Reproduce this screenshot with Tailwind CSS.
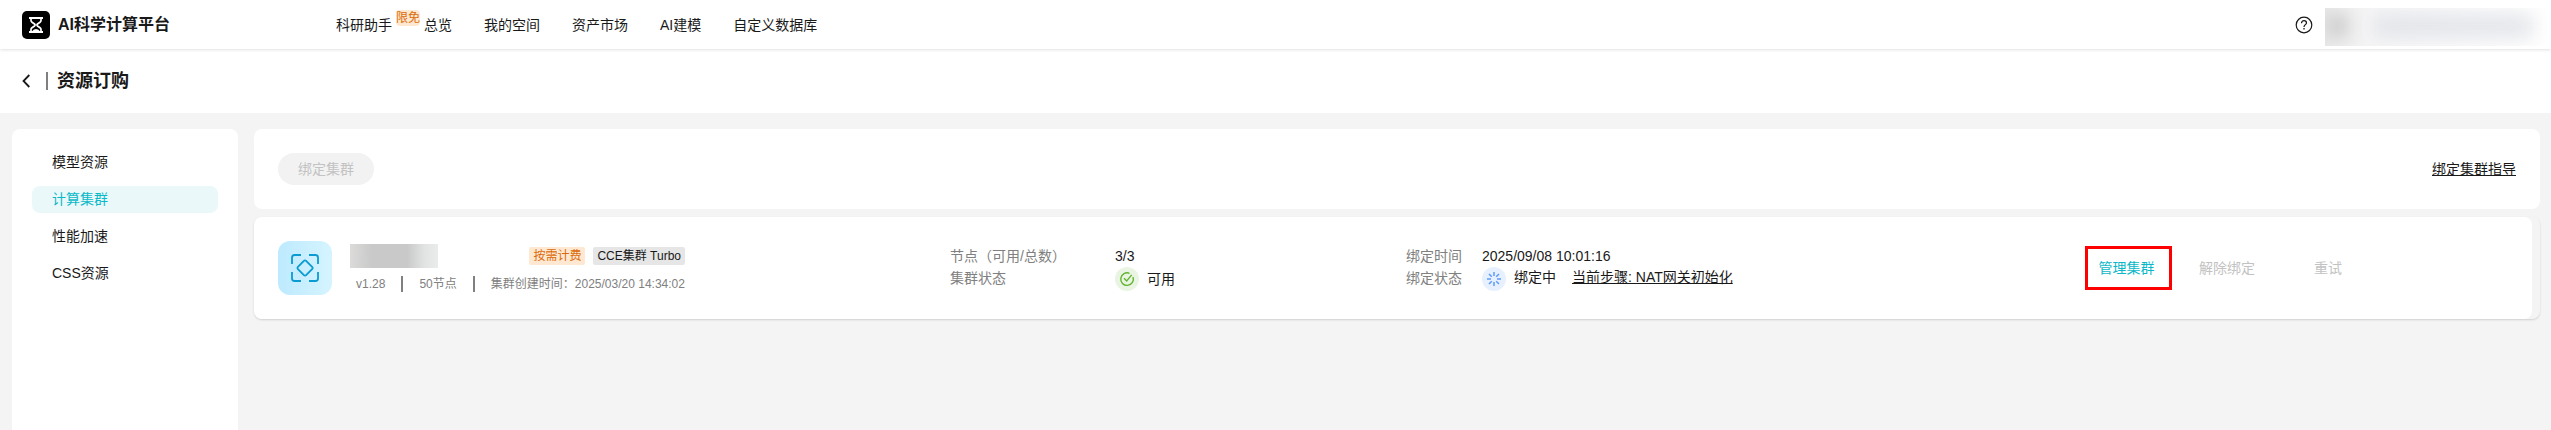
<!DOCTYPE html>
<html lang="zh-CN">
<head>
  <meta charset="UTF-8">
  <meta name="viewport" content="width=device-width, initial-scale=1.0">
  <title>AI科学计算平台</title>
  <script src="https://cdn.jsdelivr.net/npm/@tailwindcss/browser@4"></script>
</head>
<body class="min-h-screen flex flex-col bg-[#f4f4f4] text-sm text-[#191919] font-['Liberation_Sans','Noto_Sans_CJK_SC',sans-serif]">
  <header class="relative h-[49px] flex items-center bg-white pl-[22px] pr-1 shadow-[0_1px_3px_rgba(0,0,0,0.12)]">
    <a href="#" class="w-[314px] flex items-center gap-2 text-base font-bold">
      <svg class="size-7" viewBox="0 0 28 28" fill="none">
        <rect width="28" height="28" rx="5" fill="#000"/>
        <path d="M7 7h14M7 21h14" stroke="#fff" stroke-width="1.800"/>
        <path d="M9 7v2.500q0 1 1 1.700l2.500 1.800q1.200 1 0 2L10 16.800q-1 .7-1 1.700V21M19 7v2.500q0 1-1 1.700l-2.500 1.800q-1.200 1 0 2l2.500 1.800q1 .7 1 1.700V21" stroke="#fff" stroke-width="1.700"/>
        <path d="M10 20.500q1-2.500 4-2.500t4 2.500z" fill="#fff"/>
      </svg>
      AI科学计算平台
    </a>
    <nav class="flex items-center gap-8">
      <div class="flex items-center gap-1">
        <a href="#">科研助手</a>
        <span class="mb-3.5 h-4 rounded-sm bg-[#ffe8d1] text-xs leading-4 text-[#db6b0b]">限免</span>
        <a href="#">总览</a>
      </div>
      <a href="#">我的空间</a>
      <a href="#">资产市场</a>
      <a href="#">AI建模</a>
      <a href="#">自定义数据库</a>
    </nav>
    <button type="button" aria-label="帮助" class="ml-auto mr-3">
      <svg class="size-[18px]" viewBox="0 0 18 18" fill="none" stroke="#191919">
        <circle cx="9" cy="9" r="7.800" stroke-width="1.200"/>
        <path d="M6.500 7.200c0-1.600 1-2.500 2.500-2.500s2.500.9 2.500 2.200c0 1.700-2.500 1.800-2.500 4" stroke-width="1.200"/>
        <path d="M9 12v1.500" stroke-width="1.300"/>
      </svg>
    </button>
    <!-- masked account name -->
    <div class="relative mt-1 h-[38px] w-[222px] overflow-hidden bg-linear-to-r from-[#e8e8e8] via-[#f6f6f7] via-20% to-white">
      <div class="absolute left-0 top-1.5 h-6 w-6 bg-[#d4d4d4] blur-[7px]"></div>
      <div class="absolute left-12 top-2 h-5 w-40 bg-[#dfe1e6] blur-[10px]"></div>
    </div>
  </header>

  <div class="h-16 flex items-center bg-white pl-[22px]">
    <button type="button" aria-label="返回">
      <svg class="w-2 h-3.5" viewBox="0 0 8 14" fill="none" stroke="#191919" stroke-width="1.800"><path d="M7.300 1L1.500 7l5.800 6"/></svg>
    </button>
    <div class="ml-4 mr-[9px] h-[18px] w-0.5 bg-[#808080]"></div>
    <h1 class="text-lg font-bold">资源订购</h1>
  </div>

  <div class="flex-1 flex gap-4 pl-3 pr-[11px] pt-4">
    <aside class="w-[226px] shrink-0 rounded-t-lg bg-white p-5">
      <nav class="flex flex-col gap-2.5 leading-[27px]">
        <a href="#" class="rounded-lg px-5">模型资源</a>
        <a href="#" class="rounded-lg px-5 bg-[#eaf8fa] text-[#0bb8c7]">计算集群</a>
        <a href="#" class="rounded-lg px-5">性能加速</a>
        <a href="#" class="rounded-lg px-5">CSS资源</a>
      </nav>
    </aside>

    <main class="flex-1 flex flex-col gap-2">
      <section class="flex items-center justify-between rounded-lg bg-white p-6">
        <button type="button" disabled class="h-8 rounded-full bg-[#f2f2f2] px-5 text-[#c2c2c2]">绑定集群</button>
        <a href="#" class="underline">绑定集群指导</a>
      </section>

      <section class="rounded-lg bg-[#f4f4f4] pr-2 shadow-[0_1px_2px_rgba(0,0,0,0.15)]">
        <div class="grid grid-cols-[672fr_456fr_679fr_423fr] items-center rounded-lg bg-white p-6">
          <div class="flex items-center gap-[18px]">
            <div class="size-[54px] flex items-center justify-center rounded-xl bg-linear-to-r from-[#bdeaff] to-[#d5f4ff]">
              <svg class="size-7" viewBox="0 0 28 28" fill="none" stroke="#0a9bd0" stroke-width="1.800">
                <path d="M1 10V3.500Q1 1 3.500 1H10M18 1h6.500Q27 1 27 3.500V10M27 18v6.500q0 2.500-2.500 2.500H18M10 27H3.500Q1 27 1 24.500V18"/>
                <path d="M12.900 6.900q1.100-1.100 2.200 0l6 6q1.100 1.100 0 2.200l-6 6q-1.100 1.100-2.200 0l-6-6q-1.100-1.100 0-2.200z"/>
              </svg>
            </div>
            <div class="w-[335px] text-xs">
              <div class="flex h-6 items-center">
                <div class="h-6 w-[88px] bg-[linear-gradient(to_right,#dcdbda,#c9c9c9_25%,#c9c9c9_65%,#e2e4e4_85%,#eaecec)]"></div>
                <span class="ml-auto rounded-xs bg-[#ffe8d1] px-1 leading-[18px] text-[#db6b0b]">按需计费</span>
                <span class="ml-2 rounded-xs bg-[#e6e6e6] px-1 leading-[18px]">CCE集群 Turbo</span>
              </div>
              <div class="mt-2 flex items-center justify-between pl-1.5 leading-4 text-[#808080]">
                <span>v1.28</span>
                <div class="h-4 w-0.5 bg-[#808080]"></div>
                <span>50节点</span>
                <div class="h-4 w-0.5 bg-[#808080]"></div>
                <span>集群创建时间：2025/03/20 14:34:02</span>
              </div>
            </div>
          </div>

          <dl class="grid grid-cols-[165px_1fr] leading-[22px]">
            <dt class="text-[#808080]">节点（可用/总数）</dt>
            <dd>3/3</dd>
            <dt class="text-[#808080]">集群状态</dt>
            <dd class="flex items-center gap-2">
              <svg class="size-6" viewBox="0 0 24 24" fill="none" stroke="#62b42e" stroke-width="1.400">
                <circle cx="12" cy="12" r="12" fill="#eaf4e3" stroke="none"/>
                <path d="M14.500 6.300a6.300 6.300 0 1 0 3.500 3.700"/>
                <path d="M9 11.200l2.700 2.700 5-6"/>
              </svg>
              可用
            </dd>
          </dl>

          <dl class="grid grid-cols-[76px_1fr] leading-[22px]">
            <dt class="text-[#808080]">绑定时间</dt>
            <dd>2025/09/08 10:01:16</dd>
            <dt class="text-[#808080]">绑定状态</dt>
            <dd class="flex">
              <svg class="size-6" viewBox="0 0 24 24" fill="none" stroke="#5e9bf8" stroke-width="1.500">
                <circle cx="12" cy="12" r="12" fill="#e7f0fe" stroke="none"/>
                <path d="M12 5v4M17 7l-2.800 2.800M19 12h-4M17 17l-2.800-2.800M12 19v-4M7 17l2.800-2.800M5 12h4M7 7l2.800 2.800"/>
              </svg>
              <span class="ml-2 leading-5">绑定中</span>
              <a href="#" class="ml-4 leading-5 underline">当前步骤: NAT网关初始化</a>
            </dd>
          </dl>

          <div class="flex items-center">
            <button type="button" class="h-11 w-[87px] border-3 border-[#ff0000] pr-1 text-[#0bb8c7]">管理集群</button>
            <button type="button" disabled class="ml-[27px] text-[#c2c2c2]">解除绑定</button>
            <button type="button" disabled class="ml-[59px] text-[#c2c2c2]">重试</button>
          </div>
        </div>
      </section>
    </main>
  </div>
</body>
</html>
